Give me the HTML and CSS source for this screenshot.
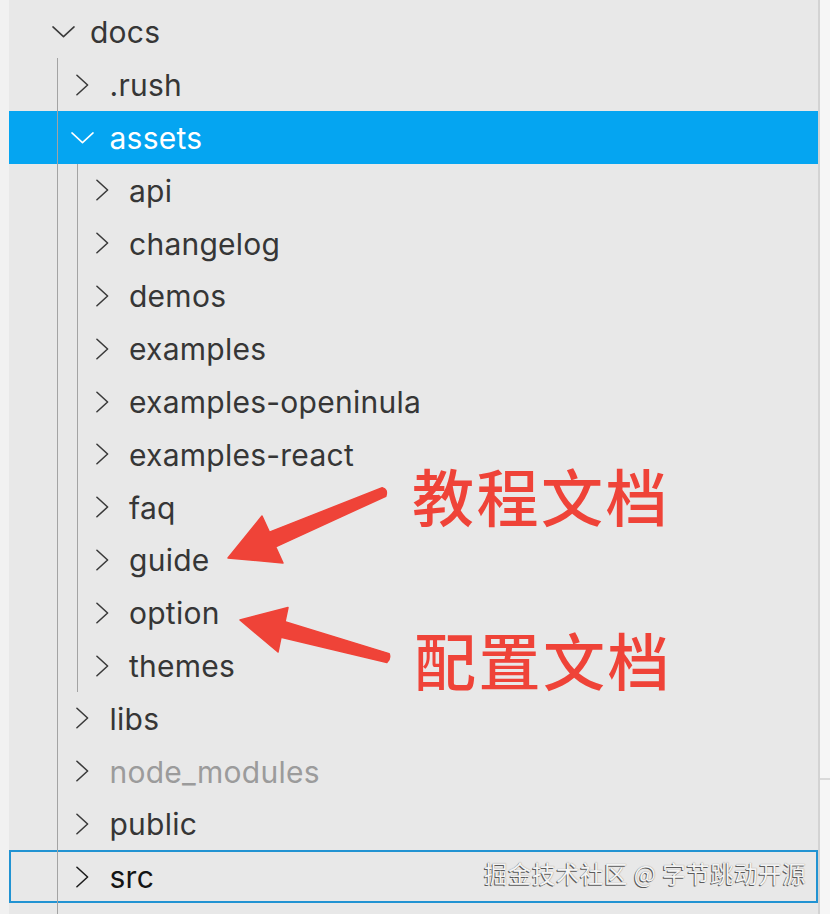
FILE: index.html
```html
<!DOCTYPE html>
<html lang="zh">
<head>
<meta charset="utf-8">
<title>Explorer</title>
<link rel="stylesheet" href="styles.css">
</head>
<body>
<div class="window">
  <div class="edge-left"></div>
  <div class="panel">
    <div class="row lvl0">
      <span class="chev"><svg class="down" viewBox="0 0 24 12"><polyline points="1,1 12,11 23,1"/></svg></span>
      <span class="name">docs</span>
    </div>
    <div class="children c1">
      <div class="row lvl1">
        <span class="chev"><svg class="right" viewBox="0 0 14 23"><polyline points="1,1 12.5,11.5 1,22"/></svg></span>
        <span class="name">.rush</span>
      </div>
      <div class="row lvl1 selected">
        <span class="chev"><svg class="down" viewBox="0 0 24 12"><polyline points="1,1 12,11 23,1"/></svg></span>
        <span class="name">assets</span>
      </div>
      <div class="children c2">
        <div class="row lvl2"><span class="chev"><svg class="right" viewBox="0 0 14 23"><polyline points="1,1 12.5,11.5 1,22"/></svg></span><span class="name">api</span></div>
        <div class="row lvl2"><span class="chev"><svg class="right" viewBox="0 0 14 23"><polyline points="1,1 12.5,11.5 1,22"/></svg></span><span class="name">changelog</span></div>
        <div class="row lvl2"><span class="chev"><svg class="right" viewBox="0 0 14 23"><polyline points="1,1 12.5,11.5 1,22"/></svg></span><span class="name">demos</span></div>
        <div class="row lvl2"><span class="chev"><svg class="right" viewBox="0 0 14 23"><polyline points="1,1 12.5,11.5 1,22"/></svg></span><span class="name">examples</span></div>
        <div class="row lvl2"><span class="chev"><svg class="right" viewBox="0 0 14 23"><polyline points="1,1 12.5,11.5 1,22"/></svg></span><span class="name">examples-openinula</span></div>
        <div class="row lvl2"><span class="chev"><svg class="right" viewBox="0 0 14 23"><polyline points="1,1 12.5,11.5 1,22"/></svg></span><span class="name">examples-react</span></div>
        <div class="row lvl2"><span class="chev"><svg class="right" viewBox="0 0 14 23"><polyline points="1,1 12.5,11.5 1,22"/></svg></span><span class="name">faq</span></div>
        <div class="row lvl2"><span class="chev"><svg class="right" viewBox="0 0 14 23"><polyline points="1,1 12.5,11.5 1,22"/></svg></span><span class="name">guide</span></div>
        <div class="row lvl2"><span class="chev"><svg class="right" viewBox="0 0 14 23"><polyline points="1,1 12.5,11.5 1,22"/></svg></span><span class="name">option</span></div>
        <div class="row lvl2"><span class="chev"><svg class="right" viewBox="0 0 14 23"><polyline points="1,1 12.5,11.5 1,22"/></svg></span><span class="name">themes</span></div>
      </div>
      <div class="row lvl1"><span class="chev"><svg class="right" viewBox="0 0 14 23"><polyline points="1,1 12.5,11.5 1,22"/></svg></span><span class="name">libs</span></div>
      <div class="row lvl1 ignored"><span class="chev"><svg class="right" viewBox="0 0 14 23"><polyline points="1,1 12.5,11.5 1,22"/></svg></span><span class="name">node_modules</span></div>
      <div class="row lvl1"><span class="chev"><svg class="right" viewBox="0 0 14 23"><polyline points="1,1 12.5,11.5 1,22"/></svg></span><span class="name">public</span></div>
      <div class="row lvl1 focused"><span class="chev"><svg class="right" viewBox="0 0 14 23"><polyline points="1,1 12.5,11.5 1,22"/></svg></span><span class="name">src</span></div>
    </div>
  </div>
  <div class="divider"></div>
  <div class="edge-right"><div class="edge-line"></div></div>

  <div class="annotations">
    <svg class="arrows" viewBox="0 0 830 914" width="830" height="914">
      <path class="arrow" d="M228,558 L262,516 L269.4,532.1 L382.2,487.8 Q388,489 385.8,496.2 L275.6,546.9 L283,563 Z"/>
      <path class="arrow" d="M240,620 L288,607.5 L285,621.8 L389.1,653.6 Q391,659 386.9,662.4 L281,637.3 L278,652 Z"/>
    </svg>
    <div class="label label-1">教程文档</div>
    <div class="label label-2">配置文档</div>
    <div class="watermark">掘金技术社区 @ 字节跳动开源</div>
  </div>
</div>
</body>
</html>
```

FILE: styles.css
```css
* { box-sizing: border-box; }
html, body {
  margin: 0;
  padding: 0;
  width: 830px;
  height: 914px;
  overflow: hidden;
  background: #e8e8e8;
}
.window {
  position: relative;
  display: flex;
  width: 830px;
  height: 914px;
  font-family: "Inter", "Liberation Sans", "Noto Sans CJK SC", sans-serif;
}
.edge-left {
  width: 9px;
  background: #f1f1f1;
}
.panel {
  width: 809px;
  background: #e8e8e8;
  display: flex;
  flex-direction: column;
  padding-top: 5.6px;
}
.divider {
  width: 2px;
  background: #d3d3d3;
}
.edge-right {
  flex: 1;
  background: #f6f6f6;
  padding-top: 778px;
}
.edge-line {
  height: 2px;
  background: #dadada;
}
.row {
  height: 52.8px;
  display: flex;
  align-items: center;
  color: #363636;
  font-size: 30px;
  letter-spacing: 0.25px;
  white-space: nowrap;
}
.row.lvl0 { padding-left: 42px; }
.row.lvl1 { padding-left: 61.5px; }
.row.lvl2 { padding-left: 81px; }
.chev {
  width: 24px;
  margin-right: 15px;
  display: flex;
  align-items: center;
  justify-content: center;
}
.chev svg {
  fill: none;
  stroke: #3a3a3a;
  stroke-width: 1.7;
  stroke-linecap: round;
  stroke-linejoin: round;
  overflow: visible;
}
.chev svg.down { width: 23px; height: 11.5px; }
.chev svg.right { width: 13px; height: 22px; }
.name { line-height: 1; position: relative; top: 0.5px; }
.row.selected {
  background: #05a5f1;
  color: #ffffff;
}
.row.selected .chev svg { stroke: #ffffff; }
.row.ignored { color: #9b9b9b; }
.row.focused {
  box-shadow: inset 0 0 0 2px #2193d2;
  color: #141414;
}
.row.focused .chev svg { stroke: #1c1c1c; }
.children { position: relative; }
.children::before {
  content: "";
  position: absolute;
  top: 0;
  bottom: 0;
  width: 1.5px;
  background: #a3a3a3;
}
.children.c1 { flex: 1; }
.children.c1::before { left: 47.5px; }
.children.c2::before { left: 67.5px; }
.annotations {
  position: absolute;
  inset: 0;
  pointer-events: none;
}
.arrows {
  position: absolute;
  left: 0;
  top: 0;
}
.arrow {
  fill: #ef4338;
  stroke: #ef4338;
  stroke-width: 1.5;
  stroke-linejoin: round;
}
.label {
  position: absolute;
  font-family: "Noto Sans CJK SC", sans-serif;
  font-weight: 500;
  font-size: 62px;
  line-height: 1;
  color: #ef4338;
  letter-spacing: 2.5px;
}
.label-1 { left: 412px; top: 464px; }
.label-2 { left: 414px; top: 628px; }
.watermark {
  position: absolute;
  left: 484px;
  top: 862px;
  font-family: "Noto Sans CJK SC", sans-serif;
  font-size: 23.5px;
  line-height: 1;
  color: #f4f4f4;
  text-shadow: -1px 1px 0 #5a5a5a, 0 0 1px #777;
  letter-spacing: 0.5px;
}
```
